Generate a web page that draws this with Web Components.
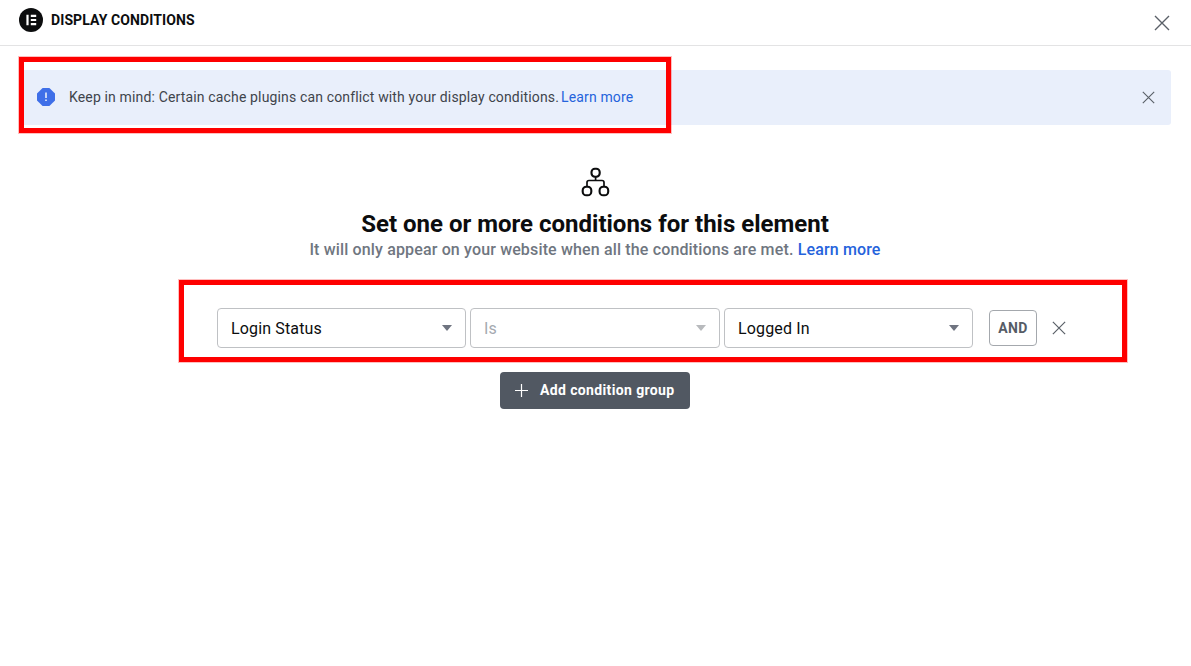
<!DOCTYPE html>
<html lang="en">
<head>
<meta charset="utf-8">
<title>Display Conditions</title>
<style>
  html, body { margin: 0; background: #fff; }
  body { font-family: Roboto, "Liberation Sans", sans-serif; color: #0c0d0e; height: 666px; overflow: hidden; position: relative; }
</style>
</head>
<body>
<modal-header>Display Conditions</modal-header>
<notice-banner>Keep in mind: Certain cache plugins can conflict with your display conditions.</notice-banner>
<empty-intro></empty-intro>
<condition-row></condition-row>
<add-group>Add condition group</add-group>
<red-outline style="left:19px;top:57px;width:652px;height:76px"></red-outline>
<red-outline style="left:179px;top:280px;width:948px;height:82px"></red-outline>

<script>
const closeIcon = (size, color) => `
  <svg width="${size}" height="${size}" viewBox="0 0 16 16" fill="none" stroke="${color}" stroke-width="1.4" aria-hidden="true">
    <path d="M1 1 15 15M15 1 1 15"/>
  </svg>`;

class ModalHeader extends HTMLElement {
  constructor() {
    super();
    this.attachShadow({ mode: "open" }).innerHTML = `
      <style>
        :host { display: flex; align-items: center; height: 40px; border-bottom: 1px solid #e3e3e4; padding: 0 21px 5px 19px; }
        svg.logo { flex: none; margin-right: 8px; }
        .title { flex: 1; font-size: 14px; font-weight: 700; letter-spacing: 0.1px; text-transform: uppercase; color: #0c0d0e; line-height: 16px; }
        .close { display: flex; margin-top: 5px; }
      </style>
      <svg class="logo" width="24" height="24" viewBox="0 0 24 24">
        <circle cx="12" cy="12" r="12" fill="#0c0d0e"/>
        <path fill="#fff" d="M7.4 6.8h2.2v10.4H7.4zM11.8 6.8h5.4v2.1h-5.4zM11.8 10.95h5.4v2.1h-5.4zM11.8 15.1h5.4v2.1h-5.4z"/>
      </svg>
      <span class="title"><slot></slot></span>
      <span class="close">${closeIcon(16, "#5a6068")}</span>`;
  }
}

class NoticeBanner extends HTMLElement {
  constructor() {
    super();
    this.attachShadow({ mode: "open" }).innerHTML = `
      <style>
        :host { display: flex; align-items: center; box-sizing: border-box; height: 55px; margin: 24px 20px 0; padding: 0 16px 1px; background: #e9effb; border-radius: 3px; font-size: 14px; letter-spacing: 0.15px; color: #3f444b; }
        svg.alert { flex: none; margin-right: 14px; margin-left: 1px; }
        .text { flex: 1; }
        a { color: #2563dc; text-decoration: none; margin-left: 2px; }
        .close { display: flex; }
      </style>
      <svg class="alert" width="18" height="18" viewBox="0 0 18 18">
        <path fill="#3f6fe8" d="M5.6 0h6.8L18 5.6v6.8L12.4 18H5.6L0 12.4V5.6z"/>
        <path fill="#e9effb" d="M8.2 4.6h1.6v5.4H8.2zM8.2 11.4h1.6V13H8.2z"/>
      </svg>
      <span class="text"><slot></slot><a href="#">Learn more</a></span>
      <span class="close">${closeIcon(13, "#5a6068")}</span>`;
  }
}

class EmptyIntro extends HTMLElement {
  constructor() {
    super();
    this.attachShadow({ mode: "open" }).innerHTML = `
      <style>
        :host { display: flex; flex-direction: column; align-items: center; padding: 42px 1px 0 0; text-align: center; }
        svg { display: block; }
        h2 { margin: 11px 0 0; font-size: 24px; line-height: 32px; font-weight: 700; color: #0c0d0e; }
        p { margin: 0; font-size: 16px; line-height: 20px; font-weight: 500; letter-spacing: 0.15px; color: #6f7680; }
        a { color: #2563dc; text-decoration: none; }
      </style>
      <svg width="30" height="30" viewBox="0 0 30 30" fill="none" stroke="#0c0d0e" stroke-width="2.1">
        <rect x="11.5" y="1.7" width="8.2" height="8" rx="3.4"/>
        <rect x="2.7" y="19.7" width="8.6" height="8.6" rx="3.6"/>
        <rect x="19.6" y="19.7" width="8.6" height="8.6" rx="3.6"/>
        <path d="M15.6 9.7V13.5M7 19.7V15.5q0-2 2-2h13q2 0 2 2v4.2" stroke-width="1.7"/>
      </svg>
      <h2>Set one or more conditions for this element</h2>
      <p>It will only appear on your website when all the conditions are met. <a href="#">Learn more</a></p>`;
  }
}

class ConditionSelect extends HTMLElement {
  constructor() {
    super();
    this.attachShadow({ mode: "open" }).innerHTML = `
      <style>
        :host { display: flex; align-items: center; justify-content: space-between; box-sizing: border-box; height: 40px; padding: 0 13px; background: #fff; border: 1px solid #bfc1c4; border-radius: 4px; font-size: 16px; letter-spacing: 0.15px; color: #0c0d0e; }
        :host([disabled]) { color: #a4a9b0; }
        i { width: 0; height: 0; border: 5.5px solid transparent; border-top: 6px solid #6f7480; border-bottom: 0; }
        :host([disabled]) i { border-top-color: #b8babd; }
      </style>
      <slot></slot><i></i>`;
  }
}

class ConditionRow extends HTMLElement {
  constructor() {
    super();
    this.attachShadow({ mode: "open" }).innerHTML = `
      <style>
        :host { display: flex; align-items: center; margin-top: 48px; padding-left: 217px; }
        condition-select { width: 249px; margin-right: 4px; }
        condition-select.middle { width: 250px; }
        condition-select.last { margin-right: 16px; }
        button { box-sizing: border-box; width: 48px; height: 36px; padding: 0; margin-right: 15px; background: #fff; border: 1px solid #a4a8ad; border-radius: 4px; font: 700 14px Roboto, "Liberation Sans", sans-serif; letter-spacing: 0.4px; color: #565c66; }
        .remove { display: flex; }
      </style>
      <condition-select>Login Status</condition-select>
      <condition-select class="middle" disabled>Is</condition-select>
      <condition-select class="last">Logged In</condition-select>
      <button>AND</button>
      <span class="remove">${closeIcon(14, "#5a6068")}</span>`;
  }
}

class AddGroup extends HTMLElement {
  constructor() {
    super();
    this.attachShadow({ mode: "open" }).innerHTML = `
      <style>
        :host { display: flex; align-items: center; box-sizing: border-box; width: 190px; height: 37px; margin: 24px 0 0 500px; padding: 0 0 1px 15px; background: #515862; border-radius: 4px; color: #fff; font-size: 14px; font-weight: 700; letter-spacing: 0.37px; }
        svg { margin-right: 12px; flex: none; }
      </style>
      <svg width="13" height="13" viewBox="0 0 13 13" stroke="#fff" stroke-width="1.2" fill="none">
        <path d="M6.5 0v13M0 6.5h13"/>
      </svg>
      <slot></slot>`;
  }
}

// red annotation frames drawn over the screenshot
class RedOutline extends HTMLElement {
  constructor() {
    super();
    this.attachShadow({ mode: "open" }).innerHTML = `
      <style>
        :host { position: absolute; box-sizing: border-box; border: 5px solid #fe0000; box-shadow: 0 0 0 1px rgba(254, 0, 0, 0.25); pointer-events: none; }
      </style>`;
  }
}

customElements.define("modal-header", ModalHeader);
customElements.define("notice-banner", NoticeBanner);
customElements.define("empty-intro", EmptyIntro);
customElements.define("condition-select", ConditionSelect);
customElements.define("condition-row", ConditionRow);
customElements.define("add-group", AddGroup);
customElements.define("red-outline", RedOutline);
</script>
</body>
</html>
